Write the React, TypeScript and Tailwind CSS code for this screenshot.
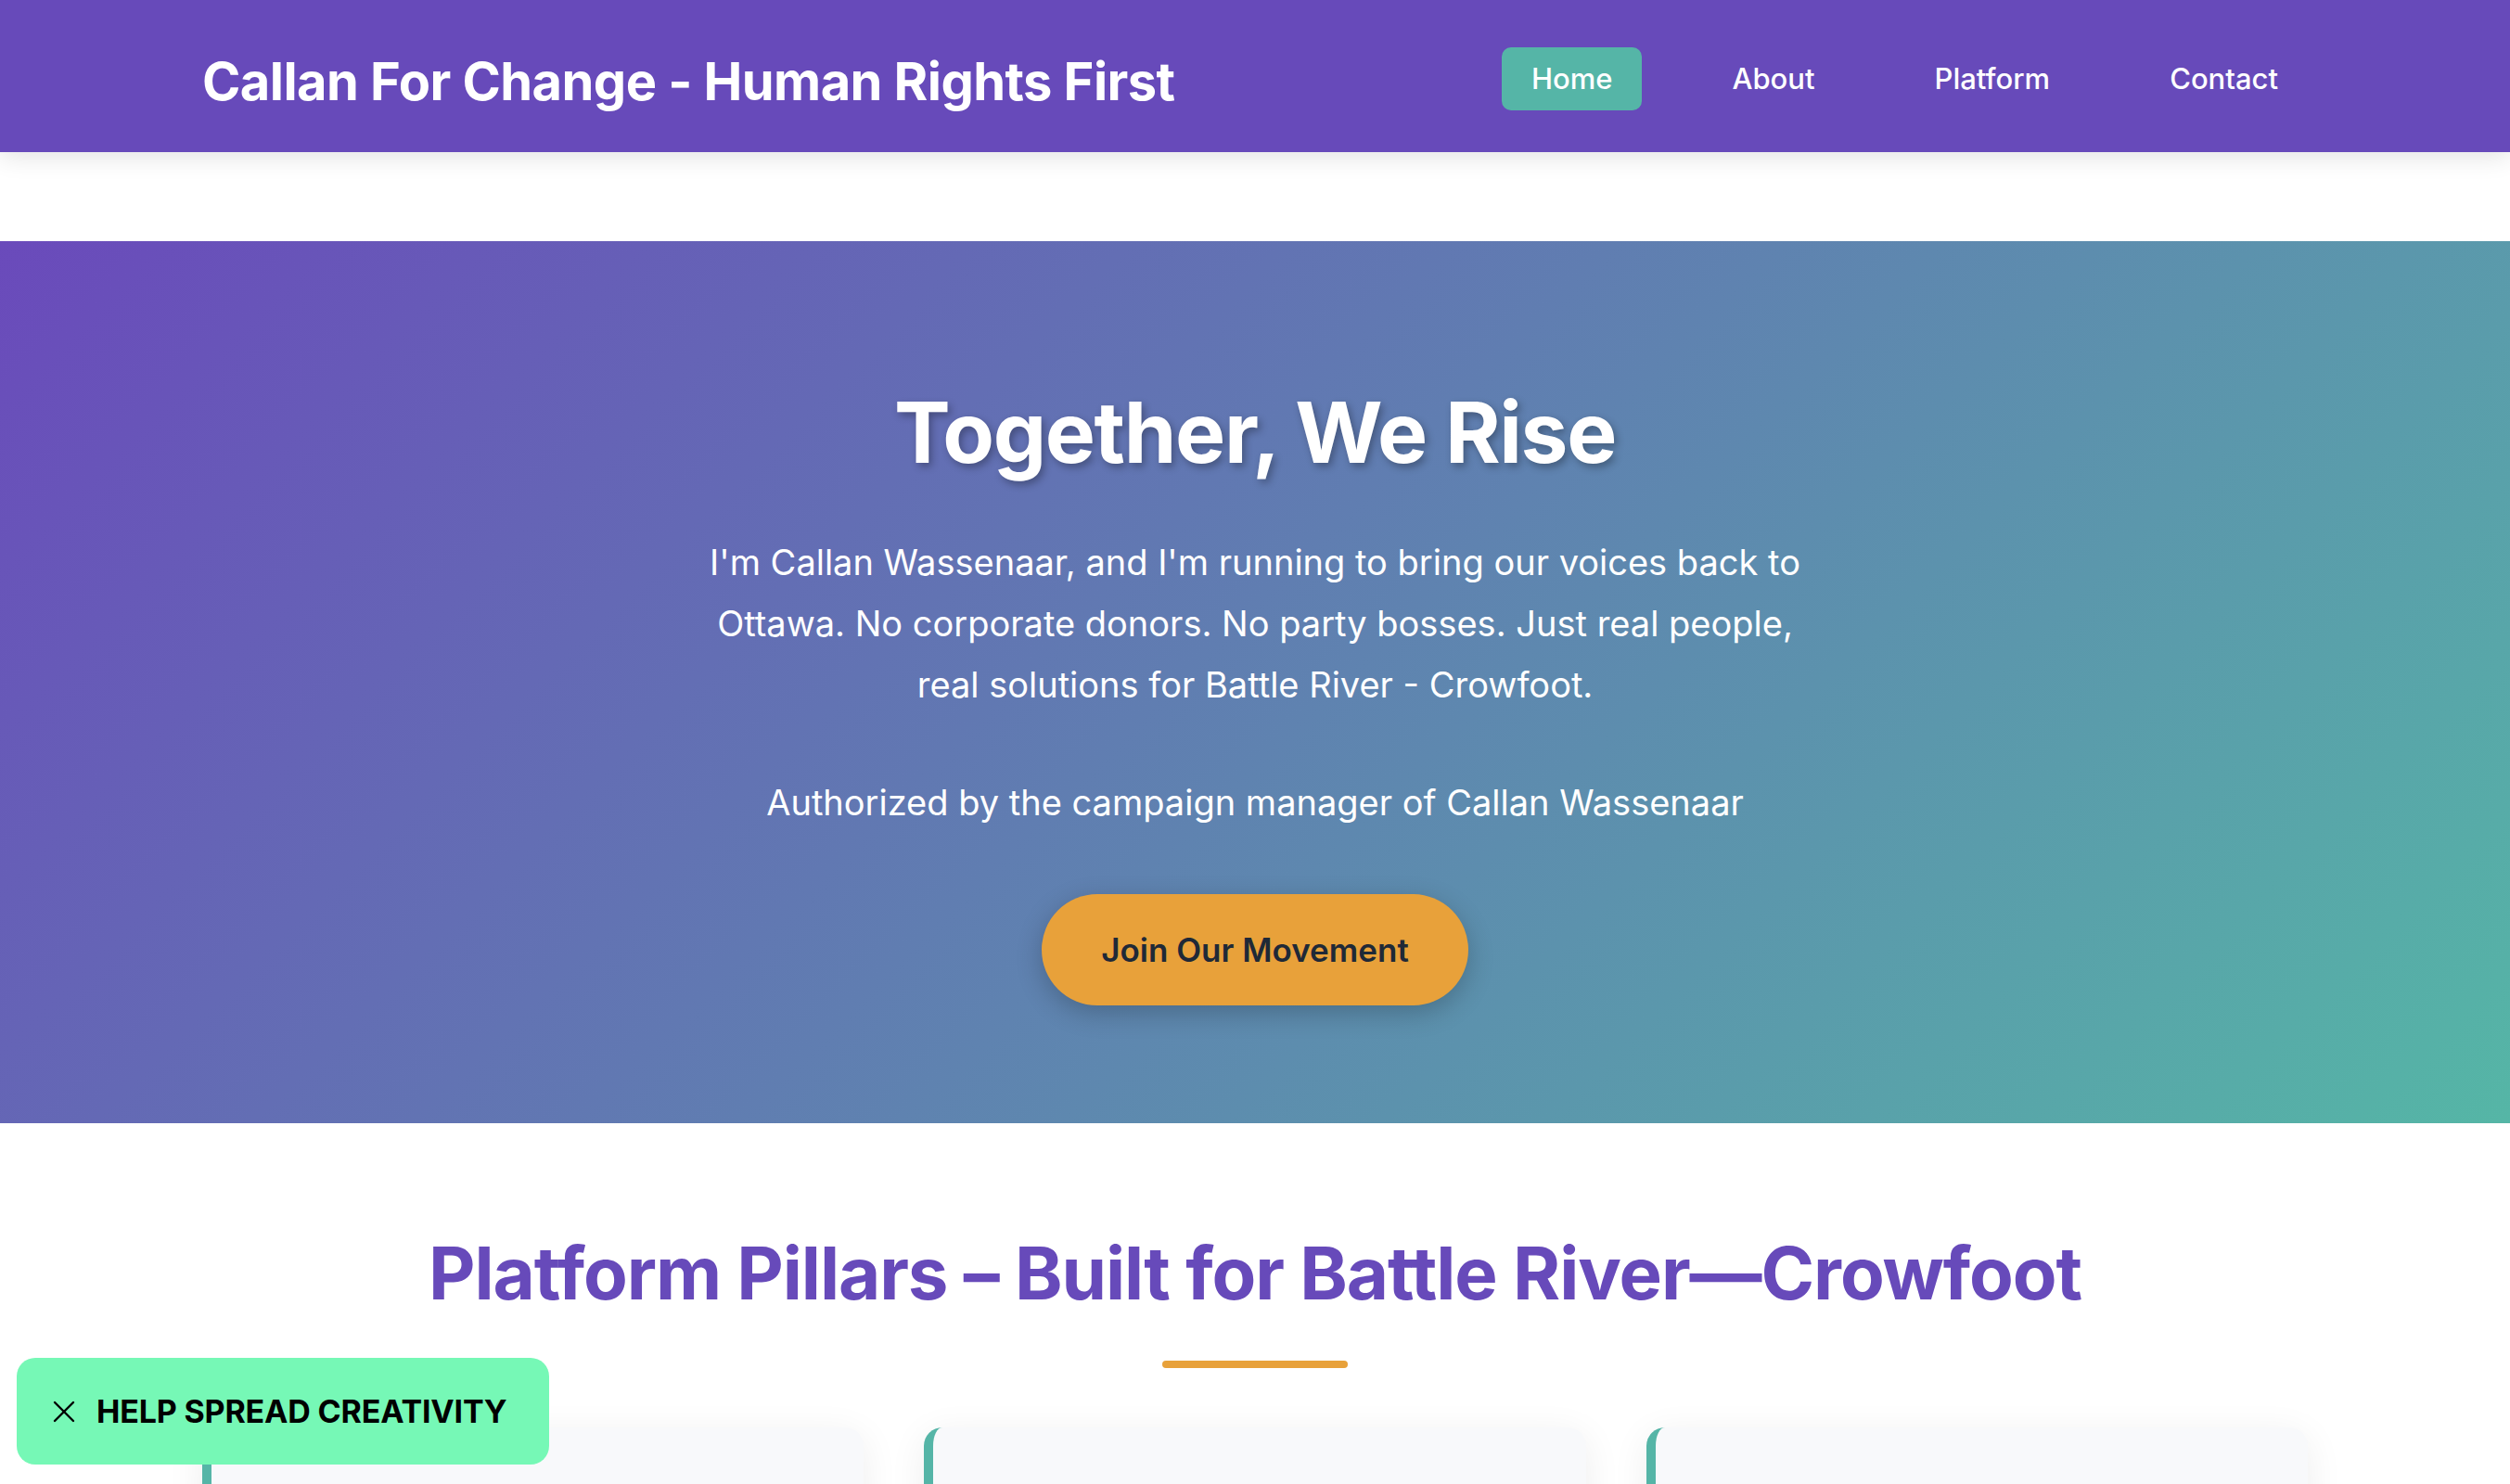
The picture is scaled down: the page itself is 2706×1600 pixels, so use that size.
const NAV = ['Home', 'About', 'Platform', 'Contact'];

const PILLARS = [
  { title: 'Human Rights First', body: 'Dignity, fairness and equal treatment for every resident of the riding.' },
  { title: 'Local Voices', body: 'Decisions made with the people of Battle River—Crowfoot, not for them.' },
  { title: 'Real Solutions', body: 'Practical plans for housing, health care and rural jobs.' },
];

function CloseIcon() {
  return (
    <svg width="24" height="24" viewBox="0 0 24 24" fill="none" stroke="#000" strokeWidth="2.4" strokeLinecap="round">
      <line x1="2" y1="2" x2="22" y2="22" />
      <line x1="22" y1="2" x2="2" y2="22" />
    </svg>
  );
}

export default function App() {
  return (
    <div className="min-h-screen bg-white font-['Inter','Liberation_Sans',sans-serif] text-[#1f2937]">

      {/* Top bar */}
      <header className="relative z-10 h-[164px] bg-[#674ABA] shadow-[0_4px_26px_rgba(0,0,0,0.12)]">
        <div className="mx-auto flex h-full max-w-[2270px] items-center justify-between">
          <h1 className="mt-[11px] text-[56px] font-bold tracking-[-0.01em] text-white">
            Callan For Change - Human Rights First
          </h1>
          <nav className="mt-[6px] flex items-center gap-[65px]">
            {NAV.map((item, i) => (
              <a
                key={item}
                className={`rounded-[10px] px-[32px] py-[11px] text-[31px] leading-[46px] font-medium text-white ${i === 0 ? 'bg-[#55B5A7]' : ''}`}
              >
                {item}
              </a>
            ))}
          </nav>
        </div>
      </header>

      <main className="pt-[96px]">

        {/* Hero */}
        <section className="bg-[linear-gradient(135deg,#6A4ABB_0%,#55B6A6_100%)] pt-[152px] pb-[127px] text-center text-white">
          <h2 className="text-[91px] font-bold leading-[1.2] tracking-[-0.015em] [text-shadow:3px_4px_8px_rgba(0,0,0,0.3)]">
            Together, We Rise
          </h2>
          <p className="mx-auto mt-[52px] max-w-[1207px] text-[38px] leading-[66px]">
            I'm Callan Wassenaar, and I'm running to bring our voices back to Ottawa. No corporate donors. No party bosses. Just real people, real solutions for Battle River - Crowfoot.
          </p>
          <p className="mt-[61px] text-[38px] leading-[66px]">
            Authorized by the campaign manager of Callan Wassenaar
          </p>
          <div className="mt-[66px] flex justify-center">
            <a className="flex h-[120px] items-center rounded-full bg-[#E8A13A] px-[64px] text-[35px] font-semibold text-[#1f2937] shadow-[0_8px_28px_rgba(0,0,0,0.22)]">
              Join Our Movement
            </a>
          </div>
        </section>

        {/* Platform pillars */}
        <section className="pt-[115px] pb-[120px]">
          <h2 className="text-center text-[78px] font-bold leading-[1.2] tracking-[-0.014em] text-[#674ABA]">
            Platform Pillars – Built for Battle River—Crowfoot
          </h2>
          <div className="mx-auto mt-[47px] h-[8px] w-[200px] rounded-full bg-[#E8A13A]" />
          <div className="mx-auto mt-[64px] grid max-w-[2270px] grid-cols-3 gap-[65px]">
            {PILLARS.map(p => (
              <div
                key={p.title}
                className="min-h-[420px] rounded-[20px] border-l-[10px] border-[#55B5A7] bg-[#F8F9FB] px-[60px] py-[69px] shadow-[0_8px_40px_rgba(0,0,0,0.07)]"
              >
                <h3 className="text-[40px] font-bold text-[#674ABA]">{p.title}</h3>
                <p className="mt-[24px] text-[30px] leading-[1.7] text-[#4b5563]">{p.body}</p>
              </div>
            ))}
          </div>
        </section>
      </main>

      {/* Floating badge */}
      <div className="fixed bottom-[21px] left-[18px] z-20 flex h-[115px] w-[574px] items-center gap-[23px] rounded-[20px] bg-[#76F8B6] pl-[39px]">
        <CloseIcon />
        <span className="text-[34px] font-bold uppercase tracking-[-0.005em] text-black">Help Spread Creativity</span>
      </div>
    </div>
  );
}
